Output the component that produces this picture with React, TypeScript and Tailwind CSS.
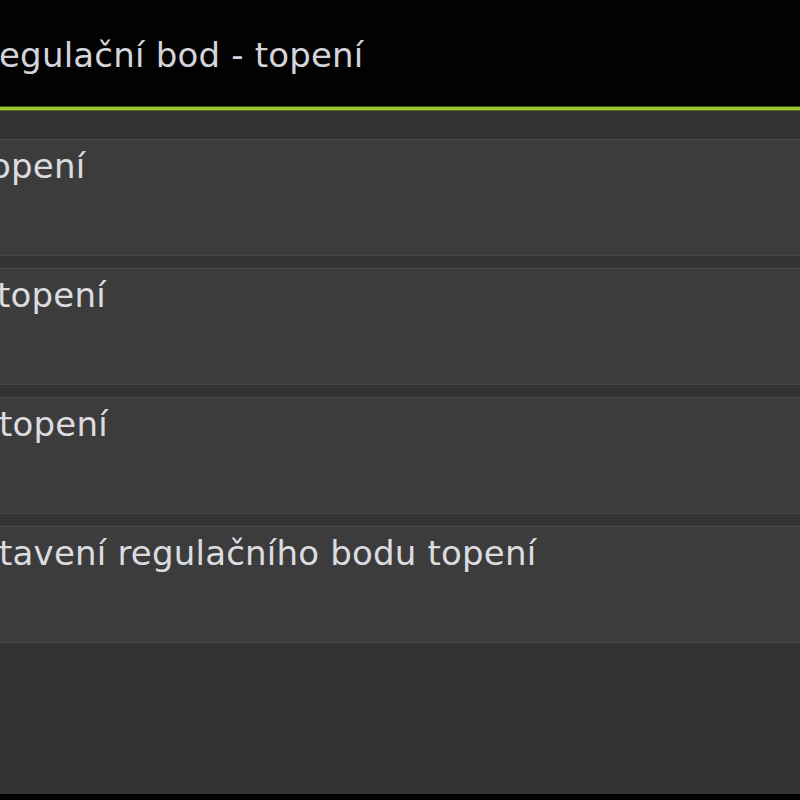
import React from "react";

const rows = [
  { t: "opení", off: "-ml-[10px]" },
  { t: "topení", off: "-ml-[3px]" },
  { t: "topení", off: "-ml-[1px]" },
  { t: "tavení regulačního bodu topení", off: "-ml-[1px]" },
];

export default function App() {
  return (
    <div
      className="w-[800px] h-[800px] overflow-hidden flex flex-col bg-black"
      style={{ fontFamily: '"DejaVu Sans", Verdana, sans-serif' }}
    >
      <div className="h-[106px] shrink-0 bg-[#020202] pt-[35px] pl-0 overflow-hidden">
        <div className="text-[34px] leading-[40px] tracking-[0.2px] text-[#d4d4da] whitespace-nowrap -ml-[1px]">
          egulační bod - topení
        </div>
      </div>
      <div className="h-[1px] bg-[#3e5a0c] shrink-0" />
      <div className="h-[3px] bg-[#9cca2e] shrink-0" />
      <div className="h-[1px] bg-[#56701e] shrink-0" />
      <div className="h-[683px] shrink-0 bg-[#333333] flex flex-col gap-[12px] pt-[28px]">
        {rows.map((r, i) => (
          <div
            key={i}
            className="h-[117px] shrink-0 bg-[#3c3c3c] border-t border-t-[#4a4a4a] border-b border-b-[#474747] pt-[6px] overflow-hidden"
          >
            <div
              className={`text-[34px] leading-[40px] tracking-[0.2px] text-[#dcdce0] whitespace-nowrap ${r.off}`}
            >
              {r.t}
            </div>
          </div>
        ))}
      </div>
      <div className="flex-1 bg-black" />
    </div>
  );
}
